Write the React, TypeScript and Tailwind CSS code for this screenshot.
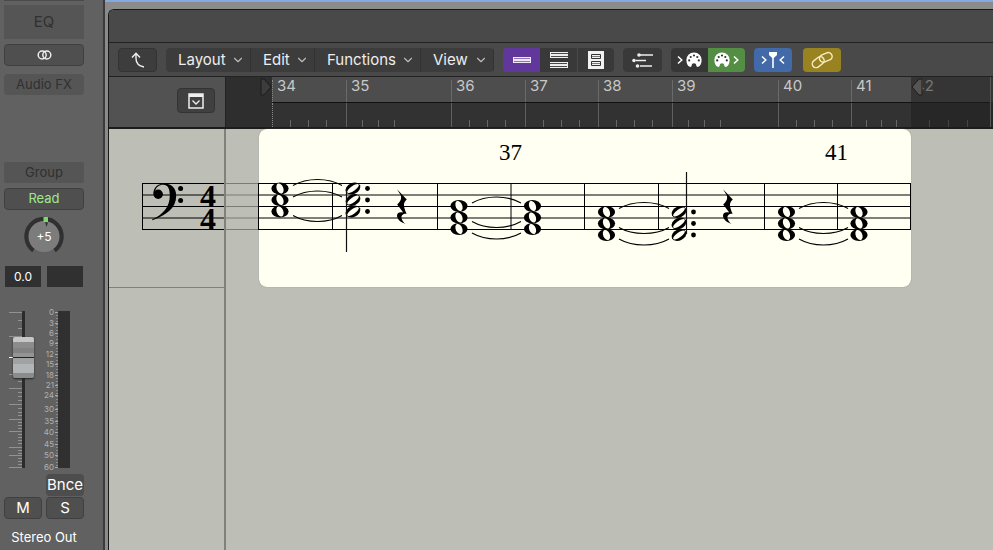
import type { ReactNode } from "react";
import clsx from "clsx";
import { ChevronDown } from "lucide-react";

const MENUS = [
  { label: "Layout", width: "w-[85px]" },
  { label: "Edit", width: "w-16" },
  { label: "Functions", width: "w-[106px]" },
  { label: "View", width: "w-[73px]" },
];

// width of each bar and distance between its beats, in ruler pixels
const BARS = [
  { n: 34, width: 74, beat: 18 },
  { n: 35, width: 105, beat: 16 },
  { n: 36, width: 74, beat: 18 },
  { n: 37, width: 73, beat: 18 },
  { n: 38, width: 74, beat: 18 },
  { n: 39, width: 106, beat: 16 },
  { n: 40, width: 73, beat: 18 },
  { n: 41, width: 60, beat: 15 },
];

const STAFF = [183.5, 195, 206.5, 218, 229.5];
const BARLINES = [332.5, 437.5, 511, 584.5, 658.5, 764.5, 837.5];

const HIGH = [188.5, 200, 211.5];
const MID = [206, 217.5, 229];
const LOW = [212, 223.5, 235];

const WHOLE = [
  { x: 280, ys: HIGH },
  { x: 459, ys: MID },
  { x: 532.5, ys: MID },
  { x: 606.5, ys: LOW },
  { x: 786.5, ys: LOW },
  { x: 859, ys: LOW },
];

const HALF = [
  { x: 353, ys: HIGH, stem: 346.5, from: 189, to: 252 },
  { x: 679, ys: LOW, stem: 686.5, from: 172, to: 234 },
];

const TIES = [
  { x1: 293, x2: 342, y: 185.5, bend: -8 },
  { x1: 293, x2: 342, y: 197, bend: -8 },
  { x1: 293, x2: 342, y: 215.5, bend: 8 },
  { x1: 472, x2: 521, y: 203, bend: -8 },
  { x1: 472, x2: 521, y: 221.5, bend: 8 },
  { x1: 472, x2: 521, y: 233, bend: 8 },
  { x1: 619, x2: 669, y: 208.5, bend: -8 },
  { x1: 619, x2: 669, y: 227.5, bend: 8 },
  { x1: 619, x2: 669, y: 239, bend: 8 },
  { x1: 799, x2: 848, y: 208.5, bend: -8 },
  { x1: 799, x2: 848, y: 227.5, bend: 8 },
  { x1: 799, x2: 848, y: 239, bend: 8 },
];

const METER = [
  [0, 312], [3, 323], [6, 333], [9, 343], [12, 354], [15, 364], [18, 375], [21, 385],
  [24, 395], [30, 409], [35, 421], [40, 432], [45, 444], [50, 455], [60, 467],
];
const FADER_MAJOR = [312, 336, 374, 388, 404, 419, 431, 447, 455, 467];
const FADER_MINOR = [
  320, 328, 381, 392, 396, 400, 408, 412, 415, 422, 425, 428, 434, 437, 440, 443, 450, 453, 458, 461, 464,
];

const bevel = "border border-[#404040] bg-[#4f4f4f]";

function StaffLines({ x1, x2 }: { x1: number; x2: number }) {
  return (
    <g stroke="#000">
      {STAFF.map((y) => (
        <line key={y} x1={x1} x2={x2} y1={y} y2={y} />
      ))}
    </g>
  );
}

function WholeNote({ x, y }: { x: number; y: number }) {
  return (
    <g transform={`translate(${x} ${y})`}>
      <ellipse rx="8.6" ry="5.9" fill="#000" />
      <ellipse rx="3.3" ry="5.3" fill="#fffff2" transform="rotate(-22)" />
    </g>
  );
}

function HalfNote({ x, y }: { x: number; y: number }) {
  return (
    <g transform={`translate(${x} ${y})`}>
      <ellipse rx="7.7" ry="5.5" fill="#000" transform="rotate(-24)" />
      <ellipse rx="7" ry="2.4" fill="#fffff2" transform="rotate(-35)" />
    </g>
  );
}

function QuarterRest({ x }: { x: number }) {
  return (
    <path
      transform={`translate(${x} 207)`}
      d="M-5-17.7 4.8-7.6C1-4.4 1.2-1 4.6 6.8 1.4 6.4-1.2 8.4-.4 11.4 0 13.6 1.8 15.6 3.6 16.9-1 15.6-5 12.4-5 8.8-5 5.6-2.2 4.8 1.2 5.6L-4.8-2.6C-1-5.8-.2-8.8-1.4-12Z"
    />
  );
}

function Clef() {
  return (
    <g>
      <path d="M153.4 194.5C153 187.5 158 183.6 164.6 183.6 171.8 183.6 176.2 188.6 176.2 196 176.2 208 166 215.4 152.4 220.3L152 219.5C163.4 214.2 169.8 207 169.8 195.5 169.8 188.4 167.8 184.8 163.3 184.8 159 184.8 155.8 187.5 155.2 191Z" />
      <circle cx="158.2" cy="194.3" r="4.7" />
      <circle cx="180.6" cy="188.6" r="2.5" />
      <circle cx="180.6" cy="200.4" r="2.5" />
    </g>
  );
}

function Palette() {
  return (
    <svg viewBox="0 0 16 16" className="size-4" aria-hidden="true">
      <path
        fill="#fff"
        fillRule="evenodd"
        d="M8 .4a7.6 7.4 0 0 1 7.6 7.8c0 3.2-1.4 5.7-3.3 6.6-1 .5-1.9-.2-2-1.3-.1-1.6-1-2.3-2.3-2.3s-2.2.7-2.3 2.3c-.1 1.1-1 1.8-2 1.3C1.8 13.9.4 11.4.4 8.2A7.6 7.4 0 0 1 8 .4Z"
      />
      <g fill="#333">
        <circle cx="3.2" cy="8.4" r="1.1" />
        <circle cx="4.7" cy="5" r="1.1" />
        <circle cx="8" cy="3.5" r="1.1" />
        <circle cx="11.3" cy="5" r="1.1" />
        <circle cx="12.8" cy="8.4" r="1.1" />
      </g>
    </svg>
  );
}

function Angle({ left }: { left?: boolean }) {
  return (
    <svg viewBox="0 0 6 10" className="h-2.5 w-1.5" fill="none" stroke="#fff" strokeWidth="1.5" aria-hidden="true">
      <path d={left ? "M5 1.5 1.2 5 5 8.5" : "M1 1.5 4.8 5 1 8.5"} />
    </svg>
  );
}

function ToolButton({ label, className, children }: { label: string; className?: string; children: ReactNode }) {
  return (
    <button
      type="button"
      aria-label={label}
      className={clsx("flex h-6 items-center justify-center", className ?? "bg-[#393939]")}
    >
      {children}
    </button>
  );
}

function ChannelStrip() {
  return (
    <aside className="w-[105px] shrink-0 border-r-2 border-[#3b3b3b] bg-[#616161] pl-1 text-white">
      <div className="flex w-20 flex-col">
        <div className="h-px bg-[#4a4a4a]" />
        <button type="button" className="mt-1 h-[34px] bg-[#555] text-[15px] text-[#303030]">
          EQ
        </button>
        <button
          type="button"
          aria-label="Channel format"
          className={clsx("mt-[5px] flex h-[22px] items-center justify-center rounded", bevel)}
        >
          <svg viewBox="0 0 15 10" className="h-2.5 w-[15px]" fill="none" stroke="#eee" strokeWidth="1.5">
            <circle cx="5.2" cy="5" r="4" />
            <circle cx="9.8" cy="5" r="4" />
          </svg>
        </button>
        <button type="button" className="mt-2 h-[21px] rounded bg-[#555] text-[13px] text-[#303030]">
          Audio FX
        </button>
        <button type="button" className="mt-[67px] h-[21px] rounded-xs bg-[#555] text-[13px] text-[#303030]">
          Group
        </button>
        <button
          type="button"
          className={clsx("mt-[5px] flex h-[22px] items-center justify-center rounded text-[13px] text-[#a0e890]", bevel)}
        >
          Read
        </button>

        <div
          role="slider"
          aria-label="Pan"
          aria-valuemin={-64}
          aria-valuemax={63}
          aria-valuenow={5}
          tabIndex={0}
          className="mt-1.5 flex justify-center"
        >
          <svg viewBox="0 0 42 40" className="h-10 w-[42px]">
            <path d="M10.5 34.5A17.5 17.5 0 1 1 31.5 34.5" fill="none" stroke="#303030" strokeWidth="4.5" />
            <circle cx="21" cy="20.5" r="15.5" fill="#7c7c7c" />
            <path d="M22 6 25 6.5 23.5 11Z" fill="#333" />
            <rect x="20.5" y="1" width="4.5" height="5" rx=".5" fill="#7fd66f" />
            <text x="21" y="25" textAnchor="middle" fontSize="12" fill="#fff">
              +5
            </text>
          </svg>
        </div>

        <div className="mt-2.5 flex gap-1.5 px-px">
          <output className="h-[21px] flex-1 bg-[#303030] text-center text-xs leading-[21px]">0.0</output>
          <output className="h-[21px] flex-1 bg-[#303030]" />
        </div>

        <div className="relative mt-[19px] h-[167px]">
          <svg viewBox="4 306 80 167" className="h-full w-full">
            <g stroke="#929292">
              {FADER_MAJOR.map((y) => (
                <line key={y} x1="9" x2="22" y1={y + 0.5} y2={y + 0.5} />
              ))}
              {FADER_MINOR.map((y) => (
                <line key={y} x1="18" x2="22" y1={y + 0.5} y2={y + 0.5} />
              ))}
            </g>
            <line x1="9" x2="14" y1="357.5" y2="357.5" stroke="#fff" />
            <rect x="22" y="311" width="3" height="157" fill="#2b2b2b" />
            <rect x="58" y="311" width="12" height="157" fill="#303030" />
            <line x1="57" x2="57" y1="312" y2="468" stroke="#8a8a8a" strokeWidth="2" strokeDasharray="1 2" />
            {METER.map(([db, y]) => (
              <g key={db}>
                <line x1="55" x2="58" y1={y + 0.5} y2={y + 0.5} stroke="#aaa" />
                <text x="54" y={y + 3} textAnchor="end" fontSize="8" fill="#b0b0b0">
                  {db}
                </text>
              </g>
            ))}
          </svg>
          <input
            type="range"
            aria-label="Volume"
            min={0}
            max={100}
            defaultValue={78}
            className="absolute left-[9px] top-[5px] h-[157px] w-[21px] appearance-none bg-transparent [direction:rtl] [writing-mode:vertical-lr] [&::-webkit-slider-thumb]:h-[41px] [&::-webkit-slider-thumb]:w-[21px] [&::-webkit-slider-thumb]:appearance-none [&::-webkit-slider-thumb]:rounded-xs [&::-webkit-slider-thumb]:bg-[linear-gradient(#c6c6c6_0_12%,#8c8c8c_12%_26%,#828282_26%_38%,#949494_38%_49%,#222_49%_52%,#a0a3a3_52%_66%,#b2b5b5_66%_88%,#8a8c8c_88%)] [&::-webkit-slider-thumb]:shadow-[0_1px_2px_#222]"
          />
        </div>

        <div className="mt-px grid grid-cols-2 gap-x-1 gap-y-px text-[15px]">
          <button type="button" className="col-start-2 flex h-[22px] items-center justify-center rounded bg-[#4d4d4d]">
            Bnce
          </button>
          <button type="button" className={clsx("flex h-[22px] items-center justify-center rounded", bevel)}>
            M
          </button>
          <button type="button" className={clsx("flex h-[22px] items-center justify-center rounded", bevel)}>
            S
          </button>
        </div>
        <p className="mt-2 text-center text-[13px] leading-5">Stereo Out</p>
      </div>
    </aside>
  );
}

function Toolbar() {
  return (
    <div className="flex h-[34px] items-center gap-[9px] border-b border-[#222] bg-[#494949] pl-[9px] pt-px">
      <ToolButton label="Up" className="w-[39px] rounded border border-[#333] bg-[#3d3d3d]">
        <svg viewBox="0 0 14 16" className="h-4 w-3.5" fill="none" stroke="#eee" strokeWidth="1.4">
          <path d="M1 5.5 5 1.2 9 5.5M5 1.5V6.5C5 11 8 14 13 15" />
        </svg>
      </ToolButton>

      <nav className="flex overflow-hidden rounded bg-[#3c3c3c]">
        {MENUS.map((m) => (
          <button
            key={m.label}
            type="button"
            className={clsx(
              "flex h-6 items-center justify-between border-r border-[#323232] pl-3 pr-[5px] text-[15px] text-[#eee]",
              m.width
            )}
          >
            {m.label}
            <ChevronDown className="size-3.5 text-[#bbb]" strokeWidth={2} />
          </button>
        ))}
      </nav>

      <div className="flex overflow-hidden rounded">
        <ToolButton label="Linear view" className="w-[37px] bg-[#61379c]">
          <svg viewBox="0 0 18 6" className="h-1.5 w-[18px]">
            <rect width="18" height="6" fill="#f0e8fa" />
            <path d="M1 1.5H17M1 4.5H17" stroke="#8f74b8" />
          </svg>
        </ToolButton>
        <ToolButton label="Wrapped view" className="w-[38px] border-r border-[#4a4a4a] bg-[#393939]">
          <svg viewBox="0 0 18 16" className="h-4 w-[18px]">
            <path d="M0 0H18V6H0ZM0 10H18V16H0Z" fill="#eee" />
            <path d="M1 1.5H18M1 4.5H18M0 11.5H17M0 14.5H17" stroke="#484848" />
          </svg>
        </ToolButton>
        <ToolButton label="Page view" className="w-9 bg-[#393939]">
          <svg viewBox="0 0 16 18" className="h-[18px] w-4">
            <rect width="16" height="18" fill="#f2f2f2" />
            <g fill="none" stroke="#333">
              <path d="M3.5 3.5H12.5V7.5H3.5ZM3.5 10.5H12.5V14.5H3.5Z" />
              <path d="M4 5.5H12M4 12.5H12" stroke="#777" />
            </g>
          </svg>
        </ToolButton>
      </div>

      <ToolButton label="Part box" className="w-[39px] rounded bg-[#393939]">
        <svg viewBox="0 0 22 15" className="h-[15px] w-[22px]" stroke="#eee" strokeWidth="1.5">
          <path d="M8 2H21M4 7.5H14M8 13H20" />
          <g fill="#eee" stroke="none">
            <circle cx="7" cy="2" r="1.8" />
            <circle cx="2" cy="7.5" r="1.8" />
            <circle cx="5.5" cy="13" r="1.8" />
          </g>
        </svg>
      </ToolButton>

      <div className="flex overflow-hidden rounded">
        <ToolButton label="MIDI in" className="w-[37px] gap-[3px] bg-[#363636]">
          <Angle />
          <Palette />
        </ToolButton>
        <ToolButton label="MIDI out" className="w-[37px] gap-[3px] bg-[#548e45]">
          <Palette />
          <Angle />
        </ToolButton>
      </div>

      <div className="flex gap-[11px]">
        <ToolButton label="Catch playhead" className="w-[38px] gap-px rounded bg-[#4269a8]">
          <Angle />
          <svg viewBox="0 0 10 18" className="h-[18px] w-2.5" fill="#fff">
            <path d="M1 1H9V4L5.8 7V17H4.2V7L1 4Z" />
          </svg>
          <Angle left />
        </ToolButton>

        <ToolButton label="Link" className="w-[38px] rounded bg-[#998320]">
          <svg viewBox="0 0 22 18" className="h-[18px] w-[22px]" fill="none" stroke="#f7edc5" strokeWidth="1.4">
            <rect x="-6.5" y="-3.8" width="13" height="7.6" rx="3.8" transform="translate(7.2 11.2) rotate(-38)" />
            <rect x="-6.5" y="-3.8" width="13" height="7.6" rx="3.8" transform="translate(14.8 6.4) rotate(-22)" />
          </svg>
        </ToolButton>
      </div>
    </div>
  );
}

function RulerBar({ n, width, beat, dim }: { n: number; width: number; beat: number; dim?: boolean }) {
  return (
    <div className="flex h-full shrink-0 flex-col" style={{ width }}>
      <div className={clsx("h-[25px]", dim ? "bg-[#353535]" : "bg-[#4d4d4d]")}>
        <div
          className={clsx(
            "mt-[3px] h-[22px] pl-1 text-[15px] leading-3",
            n === 34 ? "border-l border-dotted border-[#888]" : dim ? "" : "border-l border-[#6a6a6a]",
            dim ? "text-[#777]" : "text-[#c8c8c8]"
          )}
        >
          {n}
        </div>
      </div>
      <div className={clsx("h-px", dim ? "bg-[#191919]" : "bg-[#111]")} />
      <div
        className={clsx(
          "flex h-6 items-end",
          n === 34 ? "border-l border-dotted border-[#888]" : dim ? "" : "border-l border-[#606060]",
          dim ? "bg-[#272727]" : "bg-[#323232]"
        )}
      >
        {[1, 2, 3].map((b) => (
          <span
            key={b}
            className={clsx("h-[7px] border-r", dim ? "border-[#444]" : "border-[#666]")}
            style={{ width: beat }}
          />
        ))}
      </div>
    </div>
  );
}

function Ruler() {
  return (
    <div className="flex h-[52px] border-b-2 border-[#1c1c1c]">
      <div className="flex w-[117px] shrink-0 justify-end border-r border-[#222] bg-[#525252] pr-2.5 pt-[11px]">
        <button
          type="button"
          aria-label="Show tracks"
          className="flex h-[25px] w-[38px] items-center justify-center rounded border border-[#333] bg-[#404040]"
        >
          <svg viewBox="0 0 16 16" className="size-4" fill="none" stroke="#eee">
            <rect x="1" y="1" width="14" height="14" strokeWidth="1.5" />
            <path d="M1 2.5H15" strokeWidth="3" />
            <path d="M4.5 7.5 8 11 11.5 7.5" strokeWidth="1.3" />
          </svg>
        </button>
      </div>
      <div className="flex w-[46px] shrink-0 justify-end bg-[#2e2e2e]">
        <svg viewBox="0 0 12 18" className="mt-px h-[18px] w-3">
          <path d="M1 1H4L11 9 4 17H1Z" fill="#3c3c3c" stroke="#1c1c1c" />
        </svg>
      </div>
      {BARS.map((b) => (
        <RulerBar key={b.n} {...b} />
      ))}
      <div className="relative flex flex-1 overflow-hidden bg-[#272727]">
        <RulerBar n={42} width={79} beat={19} dim />
        <div className="flex-1 border-l border-[#555]">
          <div className="h-[25px] bg-[#353535]" />
        </div>
        <svg viewBox="0 0 12 18" className="absolute left-0 top-px h-[18px] w-3">
          <path d="M11 1H8L1 9 8 17H11Z" fill="#555" stroke="#1c1c1c" />
        </svg>
      </div>
    </div>
  );
}

function Score() {
  return (
    <div className="flex flex-1 bg-[#bdbeb5]">
      <div className="w-[117px] shrink-0 border-r-2 border-[#80817b]">
        <div className="flex h-[159px] justify-end border-b border-[#80817b]">
          <svg viewBox="141 129 83 158" className="h-[158px] w-[83px]" fontFamily="'Liberation Serif', serif">
            <StaffLines x1={142} x2={224} />
            <line x1="142.5" x2="142.5" y1="183" y2="230" stroke="#000" />
            <Clef />
            <text fontSize="32" fontWeight="bold">
              <tspan x="200" y="206.5">
                4
              </tspan>
              <tspan x="200" y="229.5">
                4
              </tspan>
            </text>
          </svg>
        </div>
      </div>
      <svg viewBox="226 129 33 158" className="h-[158px] w-[33px] shrink-0 opacity-35">
        <StaffLines x1={226} x2={259} />
      </svg>
      <section className="h-[158px] w-[652px] shrink-0 rounded-lg bg-[#fffff2] shadow-[0_0_1px_#777]">
        <svg
          viewBox="259 129 652 158"
          className="h-[158px] w-[652px] overflow-visible"
          fontFamily="'Liberation Serif', serif"
        >
          <StaffLines x1={258} x2={911} />
          <g stroke="#000">
            {[258.5, ...BARLINES, 910.5].map((x) => (
              <line key={x} x1={x} x2={x} y1="183" y2="230" />
            ))}
          </g>
          {WHOLE.map((c) => c.ys.map((y) => <WholeNote key={`${c.x}-${y}`} x={c.x} y={y} />))}
          {HALF.map((c) => (
            <g key={c.x}>
              {c.ys.map((y) => (
                <g key={y}>
                  <HalfNote x={c.x} y={y} />
                  <circle cx={c.x + 14.5} cy={y} r="2.4" />
                </g>
              ))}
              <line x1={c.stem} x2={c.stem} y1={c.from} y2={c.to} stroke="#111" strokeWidth="1.2" />
            </g>
          ))}
          {TIES.map((t) => (
            <path
              key={`${t.x1}-${t.y}`}
              d={`M${t.x1} ${t.y}C${t.x1 + 14} ${t.y + t.bend} ${t.x2 - 14} ${t.y + t.bend} ${t.x2} ${t.y}`}
              fill="none"
              stroke="#000"
              strokeWidth="1.1"
            />
          ))}
          <QuarterRest x={402} />
          <QuarterRest x={728} />
          <text x="499" y="160" fontSize="23">
            37
          </text>
          <text x="825" y="160" fontSize="23">
            41
          </text>
        </svg>
      </section>
    </div>
  );
}

export default function App() {
  return (
    <div className="flex min-h-screen overflow-hidden bg-[#8b8b8b] font-[Inter,'Liberation_Sans',sans-serif]">
      <ChannelStrip />
      <main className="flex min-w-0 flex-1 flex-col">
        <div className="h-0.5 bg-[#84a9e2]" />
        <div className="ml-[3px] mt-[7px] flex flex-1 flex-col overflow-hidden rounded-tl-md border-l border-t border-[#181818]">
          <div className="h-[33px] border-b border-[#222] bg-[#494949]" />
          <Toolbar />
          <Ruler />
          <Score />
        </div>
      </main>
    </div>
  );
}
